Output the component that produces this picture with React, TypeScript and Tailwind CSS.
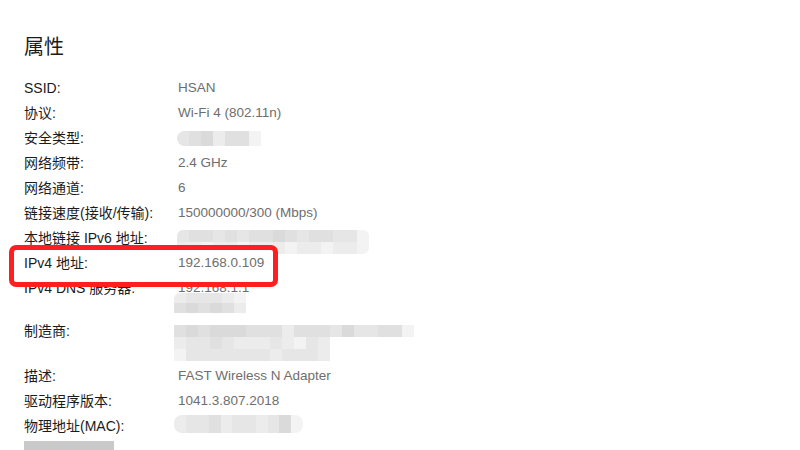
const shades = [
  'bg-[#d4d4d4]',
  'bg-[#dadada]',
  'bg-[#e0e0e0]',
  'bg-[#e6e6e6]',
  'bg-[#ececec]',
  'bg-[#f3f3f3]',
];

function Mosaic({ rows, cell = 'w-[12px]', height = 'h-[12px]', className = '' }: { rows: number[][]; cell?: string; height?: string; className?: string }) {
  return (
    <div className={`flex flex-col ${className}`}>
      {rows.map((r, i) => (
        <div key={i} className="flex">
          {r.map((c, j) => (
            <div key={j} className={`${cell} ${height} ${shades[c]}`} />
          ))}
        </div>
      ))}
    </div>
  );
}

function Row({ label, children, h = 'h-[25px]', className = '' }: { label: string; children?: React.ReactNode; h?: string; className?: string }) {
  return (
    <div className={`flex ${h} ${className}`}>
      <div className="w-[154px] shrink-0 leading-[20px] text-[#1b1b1b]">{label}</div>
      <div className="leading-[20px] text-[13.5px] text-[#6e6e6e]">{children}</div>
    </div>
  );
}

export default function App() {
  return (
    <div className="relative w-[800px] h-[450px] overflow-hidden bg-white font-['Liberation_Sans','Noto_Sans_CJK_SC',sans-serif] text-[14px]">
      <div className="pt-[32px] px-[24px]">
        <h1 className="h-[46px] text-[20px] leading-[28px] text-[#1b1b1b] font-['Noto_Sans_CJK_SC',sans-serif]">属性</h1>
        <Row label="SSID:">HSAN</Row>
        <Row label="协议:">Wi-Fi 4 (802.11n)</Row>
        <Row label="安全类型:">
          <div className="pt-[3px] -ml-[1px]">
            <Mosaic rows={[[3, 2, 1, 4, 2, 2, 5]]} height="h-[15px]" className="rounded-l-[8px] overflow-hidden" />
          </div>
        </Row>
        <Row label="网络频带:">2.4 GHz</Row>
        <Row label="网络通道:">6</Row>
        <Row label="链接速度(接收/传输):">150000000/300 (Mbps)</Row>
        <Row label="本地链接 IPv6 地址:">
          <div className="pt-[2px] -ml-[1px]">
            <Mosaic
              className="rounded-[6px] overflow-hidden"
              rows={[
                [3, 2, 2, 3, 2, 3, 2, 2, 1, 2, 3, 2, 2, 3, 3, 5],
                [4, 4, 5, 4, 4, 5, 4, 4, 4, 5, 4, 4, 5, 4, 4, 5],
              ]}
            />
          </div>
        </Row>
        <Row label="IPv4 地址:" className="relative z-10">192.168.0.109</Row>
        <Row label="IPv4 DNS 服务器:" h="h-[43px]">
          <div>192.168.1.1</div>
          <Mosaic
            className="-mt-[5px] -ml-[4px] rounded-tl-[6px] overflow-hidden"
            height="h-[10px]"
            rows={[
              [4, 3, 3, 3, 4, 5],
              [2, 1, 2, 1, 2, 4],
            ]}
          />
        </Row>
        <Row label="制造商:" h="h-[45px]">
          <Mosaic
            className="pt-[4px] -ml-[4px]"
            rows={[
              [2, 1, 2, 1, 1, 1, 2, 2, 2, 4, 2, 2, 2, 3, 1, 3, 3, 2, 2, 5],
              [4, 3, 3, 2, 3, 4, 4, 4, 3, 4, 5, 3, 4],
              [5, 3, 3, 3, 3, 3, 3, 3, 4, 3, 3, 3, 4],
            ]}
          />
        </Row>
        <Row label="描述:">FAST Wireless N Adapter</Row>
        <Row label="驱动程序版本:">1041.3.807.2018</Row>
        <Row label="物理地址(MAC):">
          <Mosaic
            className="-mt-[1px] -ml-[4px] rounded-[8px] overflow-hidden"
            height="h-[18px]"
            cell="w-[11.7px]"
            rows={[[4, 3, 3, 2, 4, 3, 3, 4, 3, 1, 5]]}
          />
        </Row>
        <div className="w-[90px] h-[14px] bg-[#c9c9c9]" />
      </div>
      <div className="absolute left-[9px] top-[245px] w-[269px] h-[42px] border-[5px] border-[#ff1f1f] rounded-[7px] bg-white" />
    </div>
  );
}
